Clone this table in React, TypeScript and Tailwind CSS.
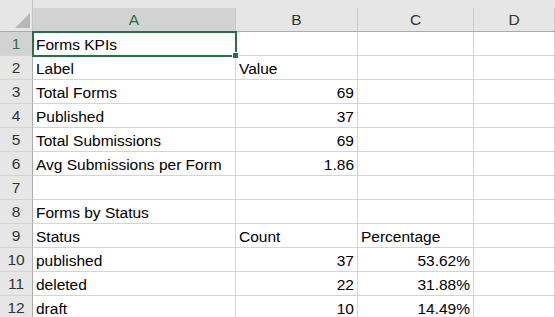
import React from "react";

type Cell = { v: string; right?: boolean };

const columns = [
  { key: "A", w: "w-[203px]" },
  { key: "B", w: "w-[122px]" },
  { key: "C", w: "w-[116px]" },
  { key: "D", w: "w-[81px]" },
];

const rows: Cell[][] = [
  [{ v: "Forms KPIs" }, { v: "" }, { v: "" }, { v: "" }],
  [{ v: "Label" }, { v: "Value" }, { v: "" }, { v: "" }],
  [{ v: "Total Forms" }, { v: "69", right: true }, { v: "" }, { v: "" }],
  [{ v: "Published" }, { v: "37", right: true }, { v: "" }, { v: "" }],
  [{ v: "Total Submissions" }, { v: "69", right: true }, { v: "" }, { v: "" }],
  [{ v: "Avg Submissions per Form" }, { v: "1.86", right: true }, { v: "" }, { v: "" }],
  [{ v: "" }, { v: "" }, { v: "" }, { v: "" }],
  [{ v: "Forms by Status" }, { v: "" }, { v: "" }, { v: "" }],
  [{ v: "Status" }, { v: "Count" }, { v: "Percentage" }, { v: "" }],
  [{ v: "published" }, { v: "37", right: true }, { v: "53.62%", right: true }, { v: "" }],
  [{ v: "deleted" }, { v: "22", right: true }, { v: "31.88%", right: true }, { v: "" }],
  [{ v: "draft" }, { v: "10", right: true }, { v: "14.49%", right: true }, { v: "" }],
];

export default function App() {
  return (
    <div
      className="relative w-[555px] h-[317px] overflow-hidden bg-white text-[15.5px] text-black"
      style={{ fontFamily: '"Liberation Sans", Arial, sans-serif' }}
    >
      {/* Column headers */}
      <div className="flex h-[32px] bg-[#e6e6e6] border-b border-[#ababab]">
        <div className="relative w-[33px] shrink-0 border-r border-[#c6c6c6]">
          <svg className="absolute left-[15px] top-[13px]" width="15" height="15" viewBox="0 0 15 15">
            <polygon points="15,0 15,15 0,15" fill="#b7b7b7" />
          </svg>
        </div>
        {columns.map((c, i) => (
          <div key={c.key} className={`${c.w} shrink-0 flex flex-col`}>
            <div className="h-[9px]" />
            <div
              className={`flex-1 flex items-center justify-center border-r border-[#c8c8c8] ${
                i === 0 ? "bg-[#d2d2d2] text-[#217346]" : "text-[#333]"
              }`}
            >
              {c.key}
            </div>
          </div>
        ))}
        <div className="flex-1" />
      </div>

      {/* Grid rows */}
      {rows.map((r, ri) => (
        <div key={ri} className="flex h-[24px]">
          <div
            className={`w-[33px] shrink-0 flex items-center justify-center border-r border-b border-r-[#ababab] border-b-[#d4d4d4] ${
              ri === 0 ? "bg-[#d2d2d2] text-[#217346]" : "bg-[#e6e6e6] text-[#333]"
            }`}
          >
            {ri + 1}
          </div>
          {r.map((cell, ci) => (
            <div
              key={ci}
              className={`${columns[ci].w} shrink-0 border-r border-b border-[#d4d4d4] px-[3px] pt-[3px] leading-[20px] whitespace-nowrap overflow-hidden ${
                cell.right ? "text-right" : "text-left"
              }`}
            >
              {cell.v}
            </div>
          ))}
          <div className="flex-1 border-b border-[#d4d4d4]" />
        </div>
      ))}

      {/* Active cell selection */}
      <div className="absolute left-[32px] top-[31px] w-[205px] h-[26px] border-2 border-[#217346] pointer-events-none" />
      <div className="absolute left-[232px] top-[52px] w-[5px] h-[5px] bg-[#217346] border border-white box-content" />
    </div>
  );
}
